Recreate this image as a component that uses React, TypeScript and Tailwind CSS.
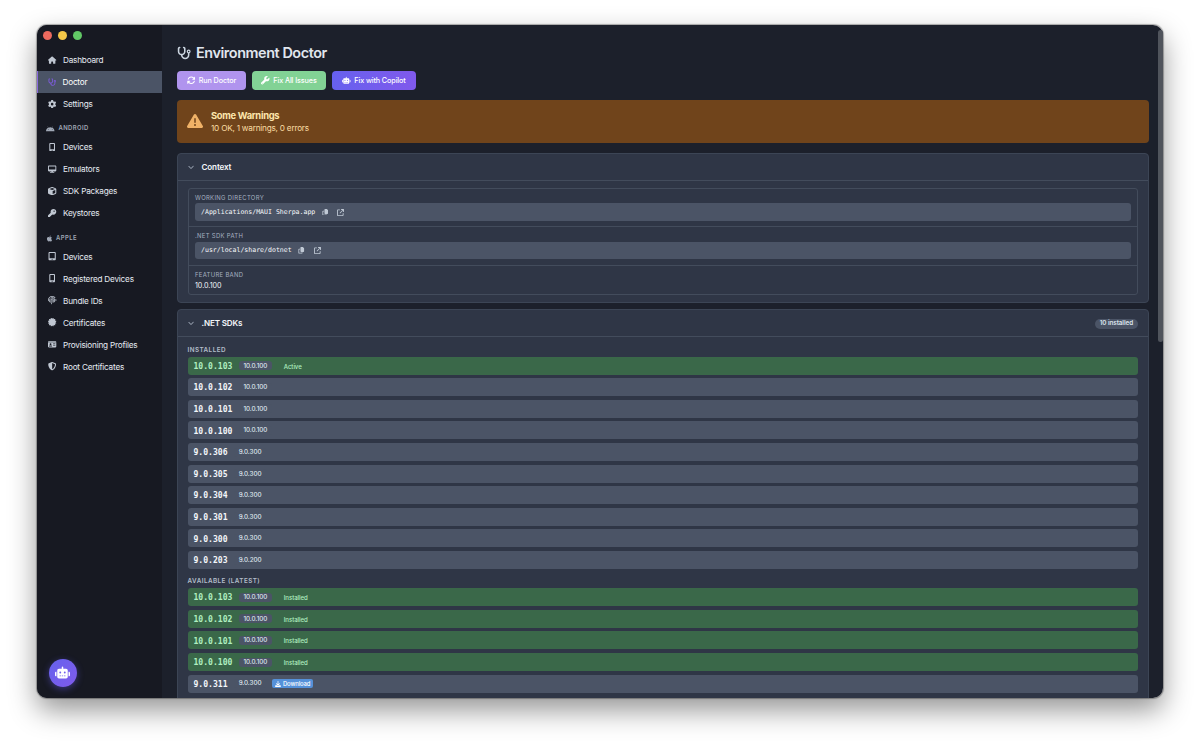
import type { ReactNode } from "react";
import type { IconType } from "react-icons";
import {
  FaAndroid,
  FaApple,
  FaArrowsRotate,
  FaArrowUpRightFromSquare,
  FaCertificate,
  FaChevronDown,
  FaCopy,
  FaCube,
  FaDesktop,
  FaDownload,
  FaFingerprint,
  FaGear,
  FaHouse,
  FaIdCard,
  FaKey,
  FaMobileScreenButton,
  FaRobot,
  FaShieldHalved,
  FaStethoscope,
  FaTabletScreenButton,
  FaTriangleExclamation,
  FaWrench,
} from "react-icons/fa6";

type NavEntry = { label: string; icon: IconType; active?: boolean };

const MAIN_NAV: NavEntry[] = [
  { label: "Dashboard", icon: FaHouse },
  { label: "Doctor", icon: FaStethoscope, active: true },
  { label: "Settings", icon: FaGear },
];

const ANDROID_NAV: NavEntry[] = [
  { label: "Devices", icon: FaMobileScreenButton },
  { label: "Emulators", icon: FaDesktop },
  { label: "SDK Packages", icon: FaCube },
  { label: "Keystores", icon: FaKey },
];

const APPLE_NAV: NavEntry[] = [
  { label: "Devices", icon: FaTabletScreenButton },
  { label: "Registered Devices", icon: FaMobileScreenButton },
  { label: "Bundle IDs", icon: FaFingerprint },
  { label: "Certificates", icon: FaCertificate },
  { label: "Provisioning Profiles", icon: FaIdCard },
  { label: "Root Certificates", icon: FaShieldHalved },
];

type Sdk = { version: string; band: string; status?: string; download?: boolean };

const INSTALLED: Sdk[] = [
  { version: "10.0.103", band: "10.0.100", status: "Active" },
  { version: "10.0.102", band: "10.0.100" },
  { version: "10.0.101", band: "10.0.100" },
  { version: "10.0.100", band: "10.0.100" },
  { version: "9.0.306", band: "9.0.300" },
  { version: "9.0.305", band: "9.0.300" },
  { version: "9.0.304", band: "9.0.300" },
  { version: "9.0.301", band: "9.0.300" },
  { version: "9.0.300", band: "9.0.300" },
  { version: "9.0.203", band: "9.0.200" },
];

const AVAILABLE: Sdk[] = [
  { version: "10.0.103", band: "10.0.100", status: "Installed" },
  { version: "10.0.102", band: "10.0.100", status: "Installed" },
  { version: "10.0.101", band: "10.0.100", status: "Installed" },
  { version: "10.0.100", band: "10.0.100", status: "Installed" },
  { version: "9.0.311", band: "9.0.300", download: true },
];

export default function App() {
  return (
    <div className="h-[747px] w-[1200px] overflow-hidden bg-white pt-[25px] pl-[36.5px] font-['Inter',sans-serif]">
      <div className="relative h-[673.4px] w-[1126.5px] rounded-[10px] shadow-[0_0_1px_1px_rgba(0,0,0,0.3),0_12px_28px_rgba(0,0,0,0.42)]">
        <div className="flex h-full overflow-hidden rounded-[10px] bg-[#1c202b]">
          <Sidebar />
          <main className="h-full w-[986.5px] shrink-0 overflow-hidden pt-[18px] pl-[15px]">
            <h1 className="flex h-5 items-center gap-[5px] text-[14.4px] leading-5 font-semibold tracking-[-0.42px] text-[#e0e6ee]">
              <FaStethoscope className="size-[14px] text-[#cbd5e0]" />
              Environment Doctor
            </h1>
            <div className="mt-2 flex gap-[6px]">
              <ActionButton icon={FaArrowsRotate} className="w-[69px] bg-[#b094ee]">
                Run Doctor
              </ActionButton>
              <ActionButton icon={FaWrench} className="w-[74px] bg-[#82d295]">
                Fix All Issues
              </ActionButton>
              <ActionButton icon={FaRobot} className="w-[84px] bg-linear-to-r from-[#6661ee] to-[#8059ec]">
                Fix with Copilot
              </ActionButton>
            </div>
            <div className="mt-[9.5px] flex h-[43.5px] items-center gap-[8px] rounded-[4px] bg-[#70441b] pl-[10px]">
              <FaTriangleExclamation className="size-4 text-[#f0b267]" />
              <div className="text-[#fbdda4]">
                <div className="text-[9.4px] leading-[13px] font-bold tracking-[-0.3px] text-[#fde6ac]">
                  Some Warnings
                </div>
                <div className="text-[8.2px] leading-[12px] tracking-[-0.22px]">10 OK, 1 warnings, 0 errors</div>
              </div>
            </div>
            <ContextCard />
            <SdkCard />
          </main>
        </div>
        <div className="absolute top-[5px] right-0 h-[312px] w-[5px] rounded-full bg-[#50545c]" />
        <button className="absolute bottom-[11.5px] left-[12px] grid size-7 place-items-center rounded-full bg-linear-to-br from-[#6562ee] to-[#7f5aea] text-white shadow-[0_2px_7px_rgba(99,90,235,0.45)]">
          <FaRobot className="size-[15px]" />
        </button>
      </div>
    </div>
  );
}

function Sidebar() {
  return (
    <aside className="h-full w-[125.5px] shrink-0 bg-[#171922]">
      <div className="flex h-[24px] items-start gap-[6px] pt-[5.5px] pl-[6px]">
        <span className="size-[9px] rounded-full bg-[#ed6a5f]" />
        <span className="size-[9px] rounded-full bg-[#f5c748]" />
        <span className="size-[9px] rounded-full bg-[#62c866]" />
      </div>
      <NavList items={MAIN_NAV} />
      <NavHeading icon={FaAndroid} label="Android" />
      <NavList items={ANDROID_NAV} />
      <NavHeading icon={FaApple} label="Apple" />
      <NavList items={APPLE_NAV} />
    </aside>
  );
}

function NavHeading({ icon: Icon, label }: { icon: IconType; label: string }) {
  return (
    <div className="flex h-[21px] items-center pt-[6.5px] pl-[9.5px] text-[#a0a8b6]">
      <Icon className={label === "Android" ? "mr-[4px] size-[8.5px]" : "mr-[3px] size-[7px]"} />
      <span className="text-[5.9px] font-semibold tracking-[0.42px] uppercase">{label}</span>
    </div>
  );
}

function NavList({ items }: { items: NavEntry[] }) {
  return (
    <nav>
      {items.map(({ label, icon: Icon, active }) => (
        <a
          key={label}
          className={
            active
              ? "flex h-[22.05px] items-center gap-[6px] border-l-[1.5px] border-[#8b6be0] bg-[#4b5466] pl-[10px] text-white"
              : "flex h-[22.05px] items-center gap-[6px] pl-[11.5px] text-[#e6ebf2]"
          }
        >
          <span className="grid w-[9px] shrink-0 place-items-center">
            <Icon className={active ? "size-[8.3px] text-[#7b5bd8]" : "size-[8.3px] text-[#c0c7d2]"} />
          </span>
          <span className="pt-[0.6px] text-[8.2px] tracking-[-0.21px] whitespace-nowrap">{label}</span>
        </a>
      ))}
    </nav>
  );
}

function ActionButton({
  icon: Icon,
  className,
  children,
}: {
  icon: IconType;
  className: string;
  children: ReactNode;
}) {
  return (
    <button
      className={`flex h-[19px] items-center justify-center gap-[3.5px] rounded-[4px] text-[7.2px] font-medium tracking-[-0.1px] whitespace-nowrap text-white ${className}`}
    >
      <Icon className="size-[8.5px] shrink-0" />
      <span className="pt-px">{children}</span>
    </button>
  );
}

function CardHeader({ title, badge }: { title: string; badge?: string }) {
  return (
    <header className="flex h-[27px] items-center border-b border-[#434c5c] px-[9.5px]">
      <FaChevronDown className="size-[6px] text-[#a8b2c1]" />
      <h2 className="ml-[8px] pt-[0.5px] text-[8.1px] font-semibold tracking-[-0.15px] text-[#f3f6fa]">{title}</h2>
      {badge && (
        <span className="mt-px ml-auto flex h-[10px] items-center rounded-full bg-[#4b5466] px-[5px] pt-px text-[6.3px] font-semibold tracking-[-0.08px] text-[#dde4ed]">
          {badge}
        </span>
      )}
    </header>
  );
}

function ContextCard() {
  return (
    <section className="mt-[9.5px] h-[150.5px] rounded-[4px] border border-[#3c4555] bg-[#2f3646]">
      <CardHeader title="Context" />
      <div className="mx-[9.5px] mt-[7px] h-[107px] rounded-[3px] border border-[#434c5c]">
        <PathRow label="Working Directory" path="/Applications/MAUI Sherpa.app" />
        <PathRow label=".NET SDK Path" path="/usr/local/share/dotnet" />
        <div className="px-[6.5px] pt-[4.5px]">
          <FieldLabel>Feature Band</FieldLabel>
          <div className="mt-[0.5px] text-[7.2px] leading-[11px] tracking-[-0.05px] text-[#eef2f7]">10.0.100</div>
        </div>
      </div>
    </section>
  );
}

function FieldLabel({ children }: { children: ReactNode }) {
  return (
    <div className="text-[5.9px] leading-[9px] tracking-[0.33px] text-[#a6b1c0] uppercase">{children}</div>
  );
}

function PathRow({ label, path }: { label: string; path: string }) {
  return (
    <div className="h-[38.5px] border-b border-[#434c5c] px-[6.5px] pt-[4.3px]">
      <FieldLabel>{label}</FieldLabel>
      <div className="mt-[1.5px] flex h-[17.5px] items-center rounded-[3px] bg-[#4b5466] pl-[6px] text-[#c0c9d5]">
        <code className="pt-[1.4px] font-['DejaVu_Sans_Mono',monospace] text-[6.55px] text-[#f8fafc]">{path}</code>
        <FaCopy className="ml-[6.5px] size-[6.5px]" />
        <FaArrowUpRightFromSquare className="ml-[9px] size-[7px]" />
      </div>
    </div>
  );
}

function SdkCard() {
  return (
    <section className="mt-[6px] h-[420px] rounded-[4px] border border-[#3c4555] bg-[#2f3646]">
      <CardHeader title=".NET SDKs" badge="10 installed" />
      <div className="px-[9.5px] pt-[7.2px]">
        <ListHeading>Installed</ListHeading>
        <SdkList items={INSTALLED} />
        <ListHeading>Available (latest)</ListHeading>
        <SdkList items={AVAILABLE} />
      </div>
    </section>
  );
}

function ListHeading({ children }: { children: ReactNode }) {
  return (
    <h3 className="h-[12.5px] pt-[0.6px] text-[6.3px] leading-[10px] font-semibold tracking-[0.46px] text-[#b3bdca] uppercase">
      {children}
    </h3>
  );
}

function SdkList({ items }: { items: Sdk[] }) {
  return (
    <ul className="mb-[6.7px] flex flex-col gap-[3.6px]">
      {items.map((sdk) => (
        <li
          key={sdk.version}
          className={
            sdk.status
              ? "flex h-[18px] items-center rounded-[3px] bg-[#3a6849] pl-[6px] text-[#b0efc0]"
              : "flex h-[18px] items-center rounded-[3px] bg-[#4b5466] pl-[6px] text-[#f3f6fa]"
          }
        >
          <span className="pt-[0.4px] font-['DejaVu_Sans_Mono',monospace] text-[8.1px] font-bold">
            {sdk.version}
          </span>
          <span className="ml-[6.5px] flex h-[9px] items-center rounded-[3px] bg-[#4b5466] px-[4.5px] pt-[1.2px] text-[6.3px] font-medium tracking-[-0.07px] text-[#dde4ed]">
            {sdk.band}
          </span>
          {sdk.status && (
            <span className="ml-[12px] pt-[0.8px] text-[6.1px] font-medium tracking-[-0.05px]">{sdk.status}</span>
          )}
          {sdk.download && (
            <button className="ml-[6.5px] flex h-[9.5px] w-[41px] items-center justify-center gap-[1.5px] rounded-[2px] bg-[#5591d9] text-[5.9px] font-medium tracking-[-0.1px] text-white">
              <FaDownload className="size-[6px]" />
              <span className="pt-px">Download</span>
            </button>
          )}
        </li>
      ))}
    </ul>
  );
}
